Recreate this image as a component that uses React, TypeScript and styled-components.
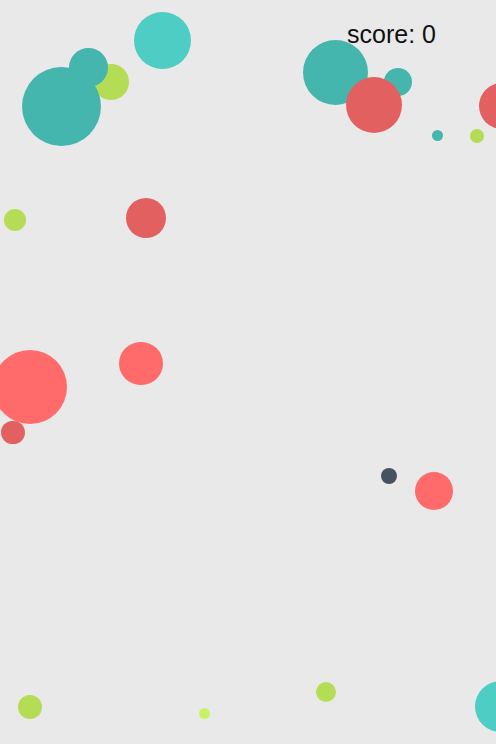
import React from "react";
import styled, { createGlobalStyle } from "styled-components";

const Global = createGlobalStyle`
  html, body { margin: 0; padding: 0; background: #ffffff; }
  #root { width: 496px; height: 745px; }
`;

const Stage = styled.div`
  position: relative;
  width: 496px;
  height: 744px;
  background: #e9e9e9;
  overflow: hidden;
  font-family: "Liberation Sans", Arial, sans-serif;
`;

const Score = styled.div`
  position: absolute;
  left: 347px;
  top: 20px;
  font-size: 25px;
  line-height: 28px;
  color: #111111;
  z-index: 10;
`;

const Ball = styled.div<{ $x: number; $y: number; $r: number; $c: string }>`
  position: absolute;
  left: ${(p) => p.$x - p.$r}px;
  top: ${(p) => p.$y - p.$r}px;
  width: ${(p) => p.$r * 2}px;
  height: ${(p) => p.$r * 2}px;
  border-radius: 50%;
  background: ${(p) => p.$c};
`;

const TEAL = "#45b6ae";
const CYAN = "#4ecdc4";
const LIME = "#b5dc55";
const BLIME = "#c7f464";
const RED = "#e36060";
const SALMON = "#ff6b6b";
const NAVY = "#475260";

const balls: { x: number; y: number; r: number; c: string }[] = [
  { x: 111, y: 82, r: 18, c: LIME },
  { x: 88.5, y: 67, r: 19.5, c: TEAL },
  { x: 61, y: 106.5, r: 39.5, c: TEAL },
  { x: 162, y: 40.5, r: 28.5, c: CYAN },
  { x: 335, y: 72, r: 32.5, c: TEAL },
  { x: 398, y: 82, r: 14, c: TEAL },
  { x: 374, y: 105, r: 28, c: RED },
  { x: 502, y: 106, r: 23, c: RED },
  { x: 437, y: 135.5, r: 5.5, c: TEAL },
  { x: 477, y: 136, r: 7, c: LIME },
  { x: 15, y: 220, r: 11, c: LIME },
  { x: 146, y: 218, r: 20, c: RED },
  { x: 30, y: 387, r: 37, c: SALMON },
  { x: 141, y: 363.5, r: 21.7, c: SALMON },
  { x: 13, y: 432.5, r: 11.7, c: RED },
  { x: 389, y: 476, r: 8, c: NAVY },
  { x: 434, y: 491, r: 19, c: SALMON },
  { x: 30, y: 706.5, r: 12, c: LIME },
  { x: 204, y: 713, r: 5.5, c: BLIME },
  { x: 326, y: 692, r: 10, c: LIME },
  { x: 500.5, y: 706.5, r: 25.5, c: CYAN },
];

export default function App() {
  return (
    <>
      <Global />
      <Stage>
        {balls.map((b, i) => (
          <Ball key={i} $x={b.x} $y={b.y} $r={b.r} $c={b.c} />
        ))}
        <Score>score: 0</Score>
      </Stage>
    </>
  );
}
